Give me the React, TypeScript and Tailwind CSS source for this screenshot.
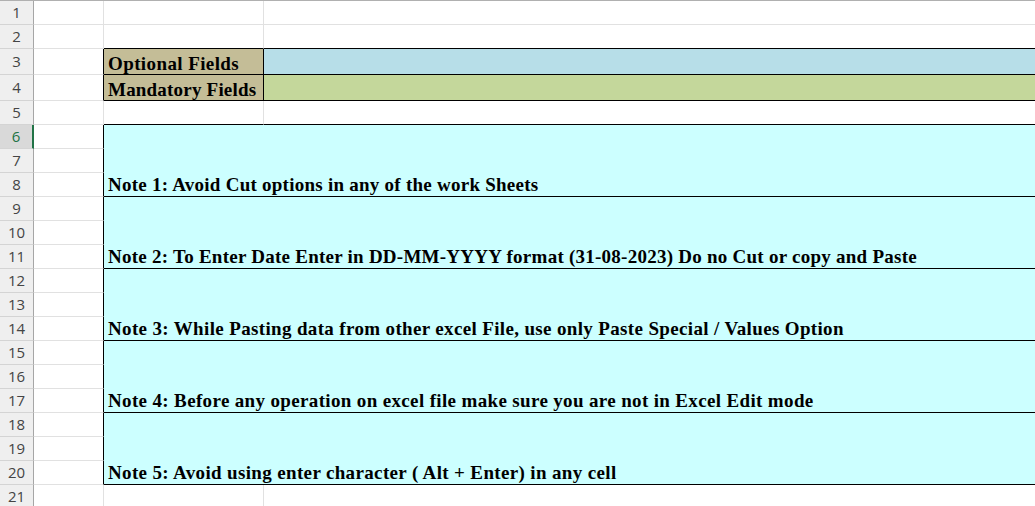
import React from 'react';

const notes = [
  'Note 1: Avoid Cut options in any of the work Sheets',
  'Note 2: To Enter Date Enter in DD-MM-YYYY format (31-08-2023) Do no Cut or copy and Paste',
  'Note 3: While Pasting data from other excel File, use only Paste Special / Values Option',
  'Note 4: Before any operation on excel file make sure you are not in Excel Edit mode',
  'Note 5: Avoid using enter character ( Alt + Enter) in any cell',
];

const serif = { fontFamily: '"Liberation Serif", "DejaVu Serif", serif' };

const RowHead = ({ n, active }: { n: number; active?: boolean }) => (
  <div
    className={
      active
        ? 'flex items-center justify-center border-b border-b-[#d4d4d4] border-r-2 border-r-[#217346] bg-[#d9d9d9] text-[15px] text-[#217346]'
        : 'flex items-center justify-center border-b border-b-[#d4d4d4] border-r border-r-[#a6a6a6] bg-[#efefef] text-[15px] text-[#444]'
    }
    style={{ fontFamily: '"Open Sans", "Liberation Sans", sans-serif', gridRow: n }}
  >
    {n}
  </div>
);

export default function App() {
  const rows = Array.from({ length: 21 }, (_, i) => i + 1);

  return (
    <div className="h-[506px] w-[1035px] overflow-hidden bg-white">
      <div className="grid grid-cols-[34px_70px_160px_1fr] grid-rows-[repeat(2,24px)_repeat(2,26px)_repeat(17,24px)] border-t border-[#b0b0b0]">
        {rows.map((n) => (
          <RowHead key={`h${n}`} n={n} active={n === 6} />
        ))}

        {/* column A */}
        {rows.map((n) => {
          const boxed = (n >= 3 && n <= 4) || (n >= 6 && n <= 20);
          return (
            <div
              key={`a${n}`}
              className={
                boxed
                  ? 'col-start-2 border-b border-r border-b-[#e1e1e1] border-r-black'
                  : 'col-start-2 border-b border-r border-[#e1e1e1]'
              }
              style={{ gridRow: n }}
            />
          );
        })}

        {/* rows 1, 2, 21 */}
        {[1, 21].map((n) => (
          <React.Fragment key={`e${n}`}>
            <div className="col-start-3 border-b border-r border-[#e1e1e1]" style={{ gridRow: n }} />
            <div className="col-start-4 border-b border-[#e1e1e1]" style={{ gridRow: n }} />
          </React.Fragment>
        ))}
        <div className="col-start-3 row-start-2 border-b border-r border-b-black border-r-[#e1e1e1]" />
        <div className="col-start-4 row-start-2 border-b border-black" />

        {/* legend */}
        <div
          className="col-start-3 row-start-3 flex items-end whitespace-nowrap border-b border-r border-black bg-[#c4bd97] pb-[1px] pl-1 text-[19px] font-bold leading-none tracking-[0.4px] text-black"
          style={serif}
        >
          Optional Fields
        </div>
        <div className="col-start-4 row-start-3 border-b border-black bg-[#b7dee8]" />
        <div
          className="col-start-3 row-start-4 flex items-end whitespace-nowrap border-b border-r border-black bg-[#c4bd97] pb-[1px] pl-1 text-[19px] font-bold leading-none tracking-[0.2px] text-black"
          style={serif}
        >
          Mandatory Fields
        </div>
        <div className="col-start-4 row-start-4 border-b border-black bg-[#c4d79b]" />

        {/* row 5 */}
        <div className="col-start-3 row-start-5 border-b border-r border-b-black border-r-[#e1e1e1]" />
        <div className="col-start-4 row-start-5 border-b border-black" />

        {/* notes */}
        {notes.map((note, i) => (
          <div
            key={note}
            className={
              i >= 2
                ? 'col-span-2 col-start-3 flex items-end whitespace-nowrap border-b border-black bg-[#ccffff] pb-[2px] pl-1 text-[19px] font-bold leading-none tracking-[0.35px] text-black'
                : 'col-span-2 col-start-3 flex items-end whitespace-nowrap border-b border-black bg-[#ccffff] pb-[2px] pl-1 text-[19px] font-bold leading-none tracking-[0.25px] text-black'
            }
            style={{ ...serif, gridRow: `${6 + i * 3} / span 3` }}
          >
            {note}
          </div>
        ))}
      </div>
    </div>
  );
}
